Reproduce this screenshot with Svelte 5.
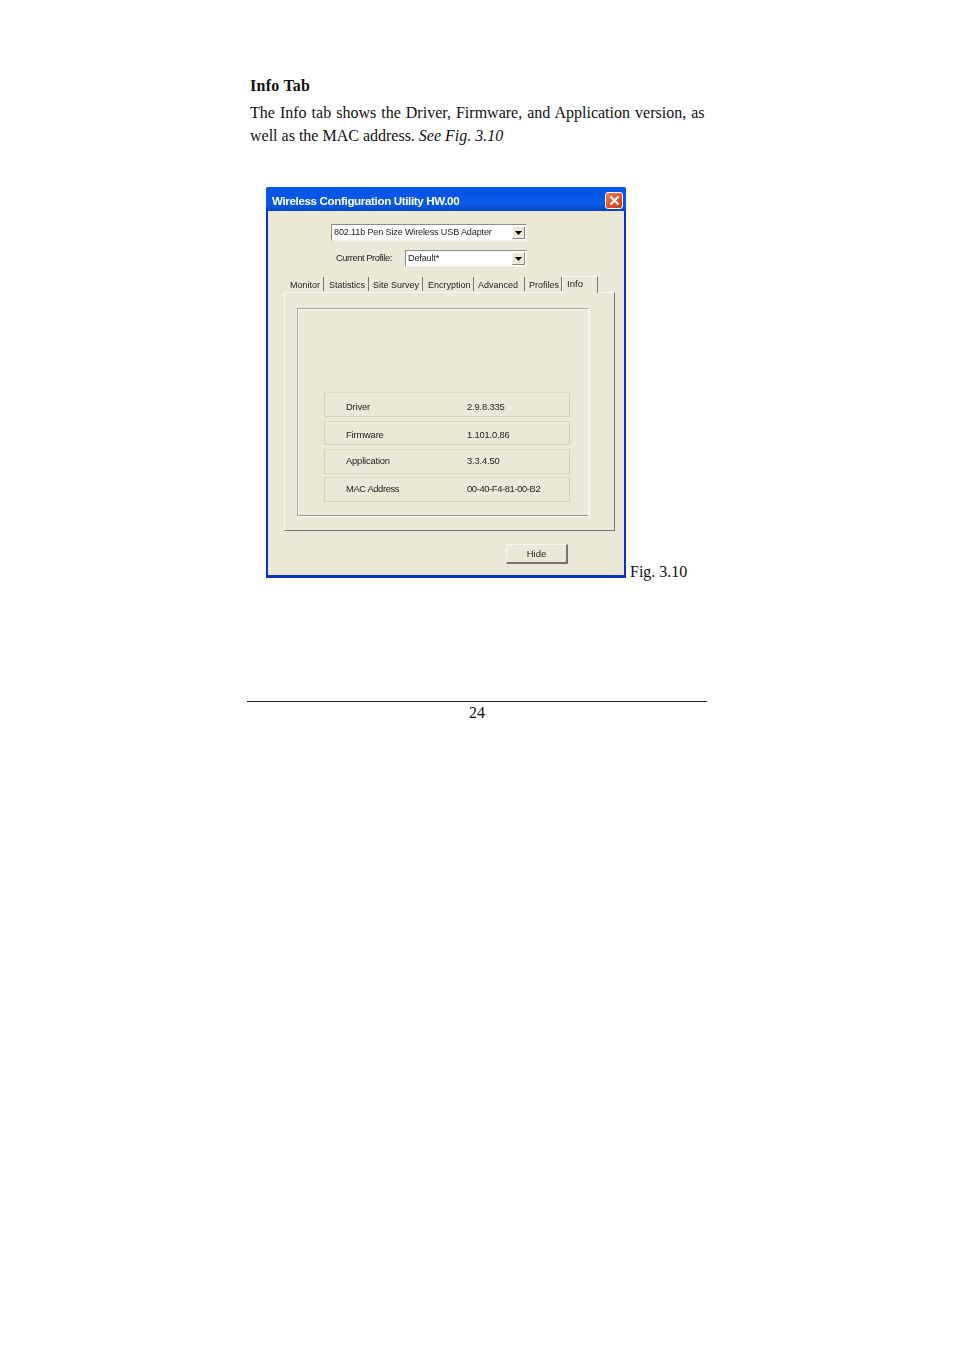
<script>
  const tabs = [
    ['Monitor', 39, 5], ['Statistics', 45, 5], ['Site Survey', 54, 4], ['Encryption', 51, 5], ['Advanced', 51, 4], ['Profiles', 37, 4]
  ];
  const rows = [
    ['Driver', '2.9.8.335', 25, 4, 1],
    ['Firmware', '1.101.0.86', 24, 4, 0],
    ['Application', '3.3.4.50', 25, 3, -2],
    ['MAC Address', '00-40-F4-81-00-B2', 25, 0, -2]
  ];
</script>

<div class="page">
  <h1>Info Tab</h1>
  <p class="body">The Info tab shows the Driver, Firmware, and Application version, as well as the MAC address. <em>See Fig. 3.10</em></p>

  <div class="figure">
    <div class="window">
      <div class="titlebar">
        <span class="title">Wireless Configuration Utility HW.00</span>
        <span class="close">
          <svg width="15" height="15" viewBox="0 0 15 15"><path d="M3.5 3.5 L11.5 11.5 M11.5 3.5 L3.5 11.5" stroke="#fff" stroke-width="2" fill="none"/></svg>
        </span>
      </div>
      <div class="content">
        <div class="combo-row first">
          <div class="combo wide">
            <span class="combo-text">802.11b Pen Size Wireless USB Adapter</span>
            <span class="arrow"><svg width="7" height="4" viewBox="0 0 7 4"><path d="M0 0H7L3.5 4Z" fill="#000"/></svg></span>
          </div>
        </div>
        <div class="combo-row second">
          <span class="label">Current Profile:</span>
          <div class="combo narrow">
            <span class="combo-text">Default*</span>
            <span class="arrow"><svg width="7" height="4" viewBox="0 0 7 4"><path d="M0 0H7L3.5 4Z" fill="#000"/></svg></span>
          </div>
        </div>
        <div class="tabs">
          {#each tabs as [name, w, pad]}
            <span class="tab" style="width:{w}px;padding-left:{pad}px">{name}</span>
          {/each}
          <span class="tab active">Info</span>
        </div>
        <div class="tabpage">
          <div class="group">
            {#each rows as [k, v, h, gap, shift]}
              <div class="row" style="height:{h}px;margin-bottom:{gap}px">
                <span class="key" style="top:{shift}px">{k}</span>
                <span class="val" style="top:{shift}px">{v}</span>
              </div>
            {/each}
          </div>
        </div>
        <div class="actions"><button>Hide</button></div>
      </div>
    </div>
    <span class="caption">Fig. 3.10</span>
  </div>

  <div class="footer">24</div>
</div>

<style>
  :global(body) { margin: 0; background: #fff; }
  .page {
    box-sizing: border-box;
    width: 954px;
    height: 1351px;
    padding: 77px 250px 0;
    font-family: "Liberation Serif", serif;
    color: #111;
    font-size: 16px;
  }
  h1 { margin: 0; font-size: 16px; line-height: 18px; font-weight: bold; letter-spacing: 0.25px; }
  .body { margin: 6px 0 0; width: 454.5px; line-height: 23px; text-align: justify; }
  .figure {
    display: flex;
    align-items: flex-end;
    margin: 40px 0 0 16px;
    gap: 4px;
    width: 460px;
  }
  .caption { font-size: 16px; line-height: 18px; white-space: nowrap; margin-bottom: -3px; }
  .window {
    box-sizing: border-box;
    flex: none;
    width: 360px;
    height: 391px;
    border: 2px solid #0a32c4;
    border-bottom-width: 3px;
    border-top: 0;
    border-radius: 3px 3px 0 0;
    background: #ebe8d8;
    font-family: "Liberation Sans", sans-serif;
    font-size: 9.5px;
    color: #222;
    filter: blur(0.3px);
  }
  .titlebar {
    height: 24px;
    margin: 0 -2px;
    border-radius: 3px 3px 0 0;
    background: linear-gradient(#0a5ae0, #0553e8 20%, #0a5ce8 70%, #0544c8);
    display: flex;
    align-items: center;
    justify-content: space-between;
    padding: 2px 3px 0 6px;
    box-sizing: border-box;
  }
  .title { color: #fff; font-weight: bold; font-size: 11.6px; letter-spacing: -0.36px; }
  .close {
    width: 18px; height: 17px;
    background: linear-gradient(135deg, #e8805c, #d8502c 60%, #c84020);
    border: 1px solid #fff;
    border-radius: 3px;
    box-sizing: border-box;
    display: flex; align-items: center; justify-content: center;
  }
  .content { padding: 0 10px 0 16px; position: relative; }
  .combo-row { display: flex; align-items: center; }
  .combo-row.first { margin: 13px 0 0 47px; }
  .combo-row.second { margin: 9px 0 0 52px; }
  .label { width: 69px; font-size: 9.3px; letter-spacing: -0.42px; padding-bottom: 1px; }
  .combo {
    box-sizing: border-box;
    height: 17px;
    background: #fff;
    border: 1px solid #8f8d80;
    border-right-color: #f2f0e6;
    border-bottom-color: #f2f0e6;
    display: flex;
    align-items: center;
    justify-content: space-between;
    padding-left: 2px;
    font-size: 9.1px;
  }
  .combo-text { letter-spacing: -0.16px; margin-top: -1px; }
  .combo.wide { width: 196px; }
  .combo.narrow { width: 122px; }
  .arrow {
    width: 13px; height: 13px;
    margin-right: 1px;
    background: #ebe8d8;
    border: 1px solid #888;
    border-top-color: #f8f8f0;
    border-left-color: #f8f8f0;
    box-sizing: border-box;
    display: flex; align-items: center; justify-content: center;
  }
  .tabs {
    display: flex;
    margin: 9px 0 0 1px;
    height: 16px;
    align-items: flex-end;
    position: relative;
    z-index: 1;
  }
  .tab {
    box-sizing: border-box;
    height: 14px;
    line-height: 17px;
    white-space: nowrap;
    border-right: 1px solid #777;
    font-size: 9px;
    margin-bottom: 1px;
  }
  .tab.active {
    width: 36px;
    height: 17px;
    margin-bottom: -1px;
    line-height: 13px;
    background: #ebe8d8;
    border-left: 1px solid #fafaf2;
    border-top: 1px solid #fafaf2;
    border-right: 1px solid #777;
    padding-left: 4px;
    font-size: 9.6px;
  }
  .tabpage {
    box-sizing: border-box;
    width: 331px;
    height: 239px;
    padding: 15px 25px 0 12px;
    border: 1px solid #f8f8f0;
    border-right: 1px solid #77766c;
    border-bottom: 1px solid #77766c;
  }
  .group {
    box-sizing: border-box;
    width: 292px;
    height: 208px;
    padding: 83px 0 0 26px;
    border: 1px solid #a9a89a;
    border-right-color: #f6f5ea;
    border-bottom-color: #98978a;
    box-shadow: inset 1px 1px 0 #f6f5ea, 1px 1px 0 #fbfbf3;
  }
  .row {
    box-sizing: border-box;
    width: 246px;
    display: block;
    position: relative;
    border: 1px solid #d3d1c2;
    border-top-color: #dcdacb;
    line-height: 26px;
    font-size: 9.4px;
    letter-spacing: -0.18px;
  }
  .row:last-child { letter-spacing: -0.38px; }
  .key { position: absolute; left: 21px; top: 0; white-space: nowrap; }
  .val { position: absolute; left: 142px; top: 0; white-space: nowrap; }
  .actions { display: flex; justify-content: flex-end; padding: 13px 46px 0 0; }
  button {
    box-sizing: border-box;
    width: 62px;
    height: 20px;
    padding: 0;
    background: #ebe8d8;
    border: 1px solid #f6f5ea;
    border-right: 2px solid #77766c;
    border-bottom: 2px solid #77766c;
    font-family: "Liberation Sans", sans-serif;
    font-size: 9.5px;
    color: #222;
  }
  .footer {
    margin: 123px 0 0 -3px;
    width: 460px;
    border-top: 1px solid #222;
    text-align: center;
    line-height: 22px;
  }
</style>
